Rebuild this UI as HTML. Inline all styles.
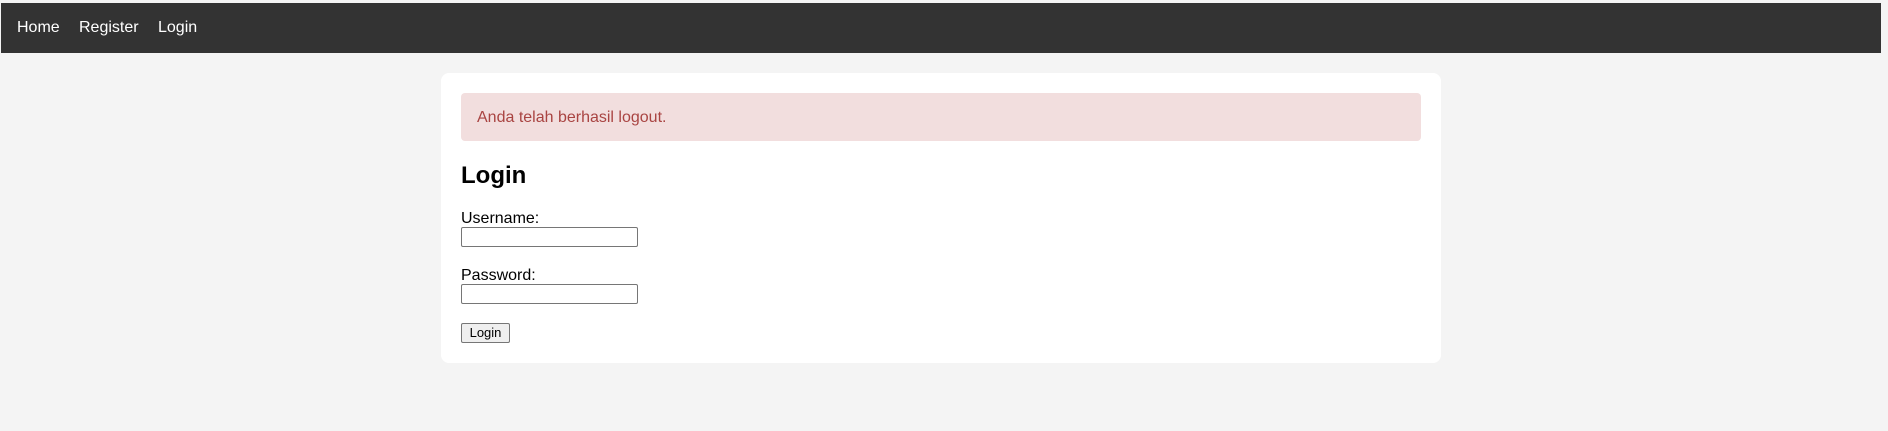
<!DOCTYPE html>
<html><head><style>
*{margin:0;padding:0;box-sizing:border-box}
html,body{width:1888px;height:431px;background:#f4f4f4;overflow:hidden;font-family:"Liberation Sans",Arial,sans-serif;position:relative}
.a{position:absolute;white-space:nowrap;line-height:18px;font-size:16px}
#nav{position:absolute;left:1px;top:3px;width:1880px;height:50px;background:#333}
#card{position:absolute;left:441px;top:73px;width:1000px;height:290px;background:#fff;border-radius:8px}
#alert{position:absolute;left:461px;top:93px;width:960px;height:48px;background:#f2dede;border-radius:4px}
.in{position:absolute;left:461px;width:177px;height:20px;border:1px solid #767676;border-radius:2px;background:#fff}
#btn{position:absolute;left:461px;top:323px;width:49px;height:20px;border:1px solid #767676;border-radius:2px;background:#efefef;font-size:13px;line-height:18px;text-align:center;color:#000}
</style></head><body>
<div id="nav"></div>
<div class="a" style="left:17px;top:19px;color:#fff">Home</div>
<div class="a" style="left:79px;top:19px;color:#fff">Register</div>
<div class="a" style="left:158px;top:19px;color:#fff">Login</div>
<div id="card"></div>
<div id="alert"></div>
<div class="a" style="left:477px;top:109px;color:#a94442">Anda telah berhasil logout.</div>
<div class="a" style="left:461px;top:162px;font-size:24px;line-height:28px;font-weight:bold;color:#000">Login</div>
<div class="a" style="left:461px;top:210px;color:#000">Username:</div>
<div class="in" style="top:227px"></div>
<div class="a" style="left:461px;top:267px;color:#000">Password:</div>
<div class="in" style="top:284px"></div>
<div id="btn">Login</div>
</body></html>
